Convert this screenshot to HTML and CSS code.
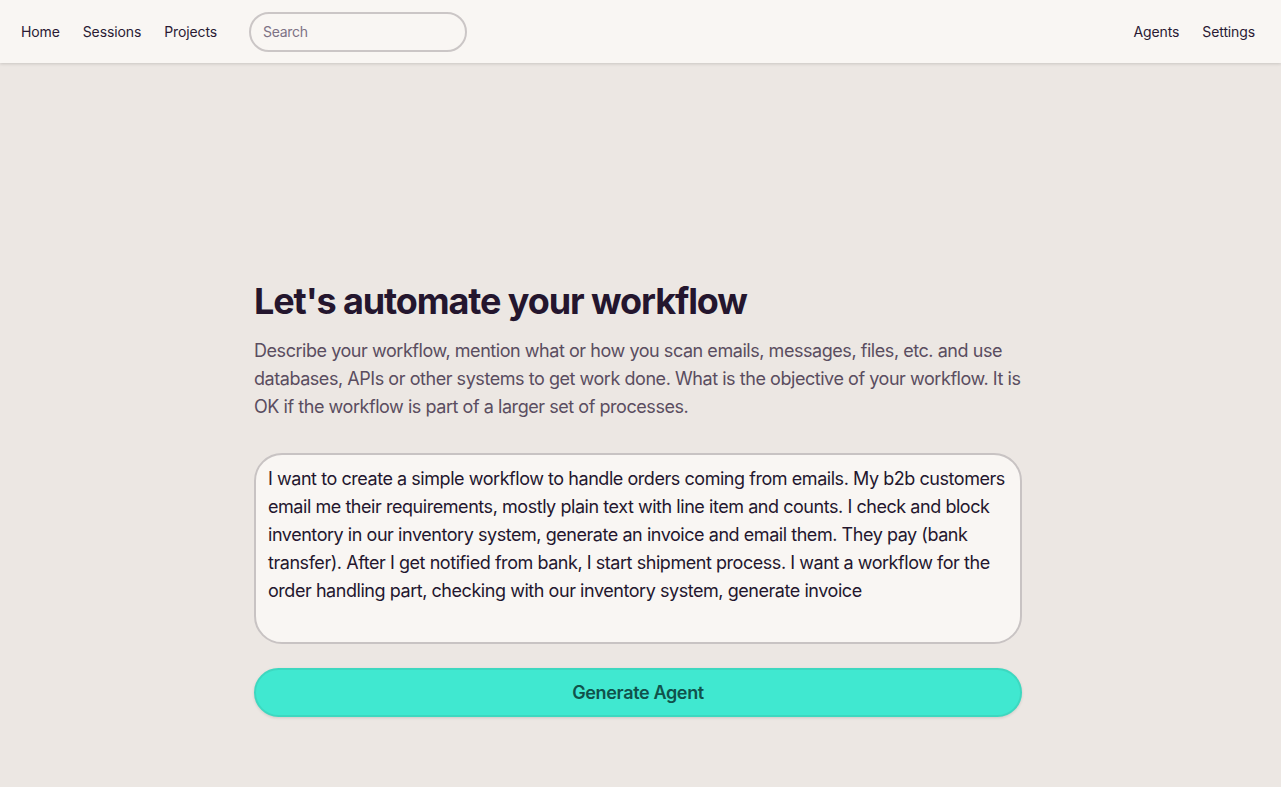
FILE: index.html
```html
<!DOCTYPE html>
<html lang="en">
<head>
<meta charset="utf-8">
<title>Let's automate your workflow</title>
<link rel="stylesheet" href="styles.css">
</head>
<body>
<header class="topbar">
  <nav class="nav-left">
    <a class="nav-link" href="#">Home</a>
    <a class="nav-link" href="#">Sessions</a>
    <a class="nav-link" href="#">Projects</a>
    <input class="search" type="text" placeholder="Search">
  </nav>
  <nav class="nav-right">
    <a class="nav-link" href="#">Agents</a>
    <a class="nav-link" href="#">Settings</a>
  </nav>
</header>
<main class="main">
  <section class="panel">
    <h1 class="title">Let's automate your workflow</h1>
    <p class="lead">Describe your workflow, mention what or how you scan emails, messages, files, etc. and use databases, APIs or other systems to get work done. What is the objective of your workflow. It is OK if the workflow is part of a larger set of processes.</p>
    <textarea class="prompt">I want to create a simple workflow to handle orders coming from emails. My b2b customers email me their requirements, mostly plain text with line item and counts. I check and block inventory in our inventory system, generate an invoice and email them. They pay (bank transfer). After I get notified from bank, I start shipment process. I want a workflow for the order handling part, checking with our inventory system, generate invoice</textarea>
    <button class="generate" type="button">Generate Agent</button>
  </section>
</main>
</body>
</html>
```

FILE: styles.css
```css
* { box-sizing: border-box; }
html, body { margin: 0; padding: 0; }
body {
  font-family: Inter, "Noto Sans", "Liberation Sans", sans-serif;
  background: #ece7e3;
  color: #24162e;
  min-height: 787px;
}
.topbar {
  height: 63px;
  background: #f9f6f3;
  display: flex;
  align-items: center;
  justify-content: space-between;
  padding: 0 26px 0 21px;
  box-shadow: 0 1px 3px rgba(0,0,0,0.15);
  position: relative;
  z-index: 1;
}
.nav-left, .nav-right {
  display: flex;
  align-items: center;
  gap: 23px;
}
.nav-link {
  font-size: 14px;
  color: #2a1a33;
  text-decoration: none;
  line-height: 20px;
  letter-spacing: -0.12px;
}
.search {
  margin-left: 9px;
  width: 218px;
  height: 40px;
  border: 2px solid #cbc6c6;
  border-radius: 20px;
  background: #f9f6f3;
  padding: 0 12px;
  font-family: inherit;
  font-size: 14px;
  letter-spacing: -0.3px;
  color: #2a1a33;
  outline: none;
}
.search::placeholder { color: #7d7285; }
.main {
  display: flex;
  justify-content: center;
  padding-top: 218px;
  padding-right: 5px;
}
.panel {
  width: 768px;
  display: flex;
  flex-direction: column;
}
.title {
  margin: 0;
  font-size: 36px;
  line-height: 40px;
  font-weight: 700;
  letter-spacing: -1.1px;
  color: #24162e;
}
.lead {
  margin: 16px 0 0;
  font-size: 18px;
  line-height: 28px;
  letter-spacing: -0.45px;
  color: #5a4d60;
}
.prompt {
  margin-top: 32px;
  height: 191px;
  width: 100%;
  resize: none;
  border: 2px solid #c8c3c3;
  border-radius: 28px;
  background: #f9f6f3;
  padding: 10px 12px;
  font-family: inherit;
  font-size: 18px;
  line-height: 28px;
  letter-spacing: -0.45px;
  color: #24162e;
  outline: none;
}
.generate {
  margin-top: 24px;
  height: 49px;
  width: 100%;
  border: 2px solid #3dd8c0;
  border-radius: 25px;
  background: #40e8d0;
  color: #10524b;
  font-family: inherit;
  font-size: 18px;
  font-weight: 600;
  letter-spacing: -0.35px;
  box-shadow: 0 1px 3px rgba(0,0,0,0.12);
  cursor: pointer;
}
```
